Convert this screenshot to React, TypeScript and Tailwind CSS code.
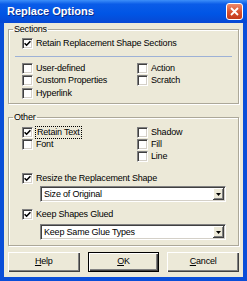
import React from 'react';

const Check = ({ checked = false }: { checked?: boolean }) => (
  <span className="flex h-[11px] w-[11px] shrink-0 items-center justify-center border border-t-[#808080] border-l-[#808080] border-b-white border-r-white bg-white shadow-[inset_1px_1px_0_#404040,inset_-1px_-1px_0_#d4d0c8]">
    {checked && (
      <svg width="7" height="7" viewBox="0 0 7 7">
        <path d="M0.6 3.2 L2.6 5.2 L6.4 1.2" stroke="#000" strokeWidth="1.6" fill="none" />
      </svg>
    )}
  </span>
);

const Row = ({ label, checked, h = 'h-[12px]', focus }: { label: string; checked?: boolean; h?: string; focus?: boolean }) => (
  <div className={`flex items-center gap-[3px] ${h}`}>
    <Check checked={checked} />
    <span className={focus ? 'outline outline-1 outline-dotted outline-black px-[1px] leading-[11px]' : 'leading-[11px]'}>{label}</span>
  </div>
);

const Combo = ({ value }: { value: string }) => (
  <div className="ml-[31px] mr-[12px] flex h-[16px] items-center border border-t-[#808080] border-l-[#808080] border-b-white border-r-white bg-white shadow-[inset_1px_1px_0_#404040,inset_-1px_-1px_0_#d4d0c8] pl-[3px] pr-[1px]">
    <span className="flex-1 leading-[11px]">{value}</span>
    <span className="flex h-[12px] w-[11px] items-center justify-center bg-[#ece9d8] shadow-[inset_-1px_-1px_0_#404040,inset_1px_1px_0_#fff,inset_-2px_-2px_0_#808080]">
      <svg width="5" height="3" viewBox="0 0 5 3">
        <path d="M0 0 H5 L2.5 3 Z" fill="#000" />
      </svg>
    </span>
  </div>
);

const Group = ({ title, className = '', children }: { title: string; className?: string; children: React.ReactNode }) => (
  <fieldset className={`border border-[#aca899] shadow-[inset_1px_1px_0_#fff,1px_1px_0_#fff] px-0 ${className}`}>
    <legend className="ml-[4px] px-[1px] leading-[11px]">{title}</legend>
    {children}
  </fieldset>
);

const Btn = ({ children, primary }: { children: React.ReactNode; primary?: boolean }) => (
  <button
    className={`flex h-[20px] items-center justify-center bg-[#ece9d8] ${
      primary
        ? 'border border-black shadow-[inset_1px_1px_0_#fff,inset_-1px_-1px_0_#404040,inset_-2px_-2px_0_#808080]'
        : 'shadow-[inset_1px_1px_0_#fff,inset_-1px_-1px_0_#404040,inset_-2px_-2px_0_#808080]'
    }`}
  >
    {children}
  </button>
);

export default function App() {
  return (
    <div className="flex h-[281px] w-[247px] flex-col bg-[#0a4ed8] font-['Liberation_Sans',Arial,sans-serif] text-[9px] tracking-[-0.2px] text-black">
      {/* title bar */}
      <div className="flex h-[23px] shrink-0 items-center justify-between bg-[linear-gradient(to_bottom,#3d8ff9_0%,#0a5ce8_18%,#0055e5_60%,#0848d3_100%)] pl-[7px] pr-[4px]">
        <span className="text-[11px] font-bold tracking-normal text-white [text-shadow:1px_1px_0_#0a2a8a]">Replace Options</span>
        <span className="flex h-[17px] w-[17px] items-center justify-center rounded-[3px] border border-white bg-[linear-gradient(to_bottom,#ee8a6c,#d6502f_55%,#c33a1c)]">
          <svg width="9" height="9" viewBox="0 0 9 9">
            <path d="M1 1 L8 8 M8 1 L1 8" stroke="#fff" strokeWidth="1.8" />
          </svg>
        </span>
      </div>

      {/* body */}
      <div className="mx-[4px] mb-[4px] flex flex-1 flex-col bg-[#ece9d8] px-[4px] pt-[1px]">
        <Group title="Sections" className="pb-[4px]">
          <div className="mt-[2px] pl-[13px]">
            <Row label="Retain Replacement Shape Sections" checked h="h-[13px]" />
          </div>
          <div className="mx-[6px] mt-[6px] h-px bg-[#9db1d6]" />
          <div className="mt-[5px] grid grid-cols-[115px_1fr] pl-[13px]">
            <div className="flex flex-col">
              <Row label="User-defined" />
              <Row label="Custom Properties" h="h-[13px]" />
              <Row label="Hyperlink" />
            </div>
            <div className="flex flex-col">
              <Row label="Action" />
              <Row label="Scratch" h="h-[13px]" />
            </div>
          </div>
        </Group>

        <Group title="Other" className="mt-[8px] pb-[5px]">
          <div className="mt-[3px] grid grid-cols-[115px_1fr] pl-[13px]">
            <div className="flex flex-col">
              <Row label="Retain Text" checked focus />
              <Row label="Font" />
            </div>
            <div className="flex flex-col">
              <Row label="Shadow" />
              <Row label="Fill" />
              <Row label="Line" />
            </div>
          </div>
          <div className="mt-[10px] pl-[13px]">
            <Row label="Resize the Replacement Shape" checked />
          </div>
          <div className="mt-[2px]">
            <Combo value="Size of Original" />
          </div>
          <div className="mt-[6px] pl-[13px]">
            <Row label="Keep Shapes Glued" checked />
          </div>
          <div className="mt-[4px]">
            <Combo value="Keep Same Glue Types" />
          </div>
        </Group>

        <div className="mt-[6px] grid grid-cols-3 gap-[8px]">
          <Btn>
            <span><u>H</u>elp</span>
          </Btn>
          <Btn primary>
            <span><u>O</u>K</span>
          </Btn>
          <Btn>
            <span><u>C</u>ancel</span>
          </Btn>
        </div>
      </div>
    </div>
  );
}
